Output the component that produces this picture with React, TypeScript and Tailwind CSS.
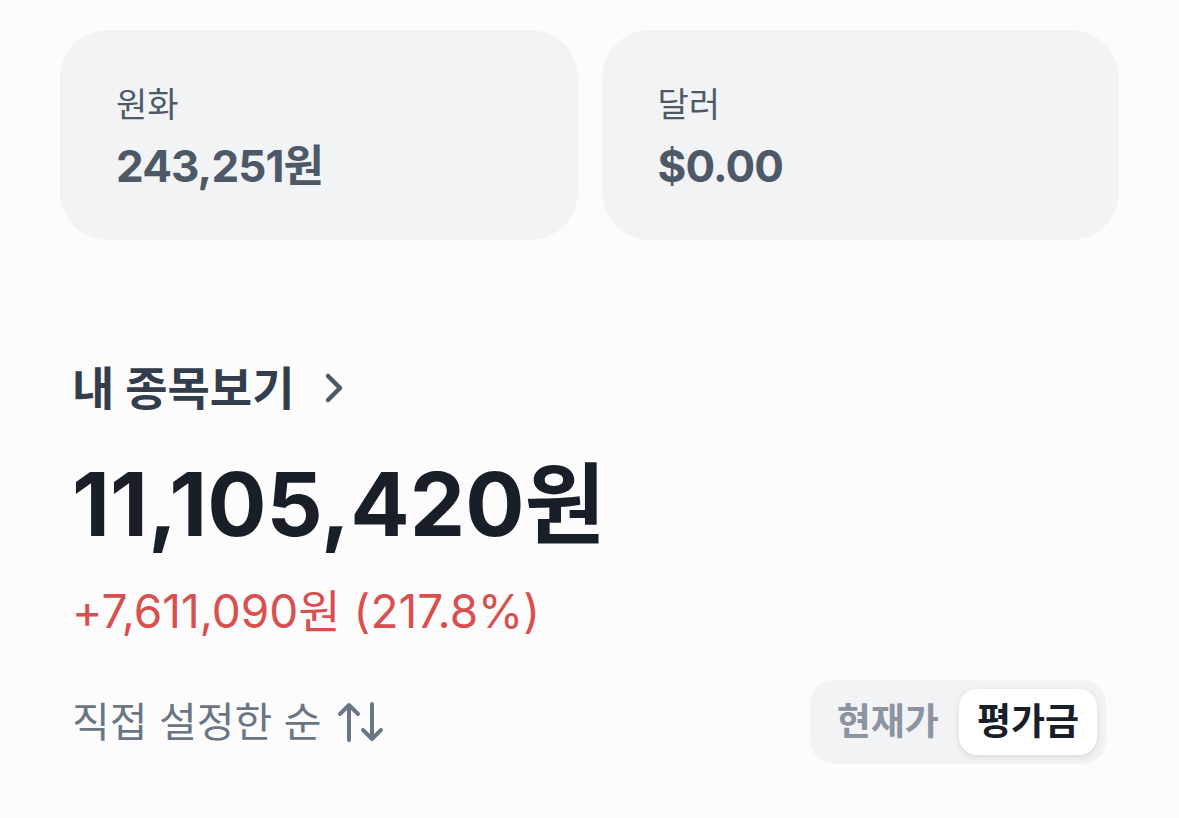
import React from 'react';

const font = { fontFamily: 'Inter, "Noto Sans CJK KR", sans-serif' };

function ChevronRight() {
  return (
    <svg width="22" height="34" viewBox="0 0 22 34" fill="none" className="ml-[28px]">
      <path d="M5 5l12 12-12 12" stroke="#4e5968" strokeWidth="4.5" strokeLinecap="round" strokeLinejoin="round" />
    </svg>
  );
}

function SortArrows() {
  return (
    <svg width="48" height="42" viewBox="0 0 48 42" fill="none" className="ml-[16px]">
      <path d="M12 39V4M3 13l9-9 9 9" stroke="#6b7684" strokeWidth="4" strokeLinecap="round" strokeLinejoin="round" />
      <path d="M35 3v35M26 29l9 9 9-9" stroke="#6b7684" strokeWidth="4" strokeLinecap="round" strokeLinejoin="round" />
    </svg>
  );
}

function BalanceCard({ label, value }: { label: string; value: string }) {
  return (
    <div className="flex h-[210px] flex-col justify-center rounded-[48px] bg-[#f2f3f5] pl-[56px] pt-[6px]">
      <span className="text-[34px] leading-none text-[#4e5968]">{label}</span>
      <span className="mt-[22px] text-[44px] font-bold leading-none tracking-[-0.02em] text-[#4e5968]">{value}</span>
    </div>
  );
}

export default function App() {
  return (
    <div className="min-h-screen bg-[#fcfcfd] px-[60px] pt-[30px]" style={font}>
      {/* Balance cards */}
      <div className="grid grid-cols-2 gap-6">
        <BalanceCard label="원화" value="243,251원" />
        <BalanceCard label="달러" value="$0.00" />
      </div>

      {/* Portfolio summary */}
      <div className="px-3 pt-[125px]">
        <button className="flex items-center text-[46px] font-bold leading-none text-[#333d4b]">
          내 종목보기
          <ChevronRight />
        </button>

        <div className="mt-[49px] text-[88px] font-bold leading-none text-[#191f28]">
          11,105,420원
        </div>

        <div className="mt-[40px] text-[46px] leading-none text-[#d94f4f]">
          +7,611,090원 (217.8%)
        </div>

        {/* Sort + toggle */}
        <div className="mt-[46px] flex items-center justify-between pr-[1px]">
          <button className="flex items-center text-[41px] leading-none text-[#6b7684]">
            직접 설정한 순
            <SortArrows />
          </button>

          <div className="flex h-[84px] items-center rounded-[24px] bg-[#f2f3f5] p-[9px] pl-[27px]">
            <span className="pr-[20px] text-[37px] font-bold text-[#8b95a1]">현재가</span>
            <span className="flex h-full items-center rounded-[18px] bg-white px-[18px] text-[37px] font-bold text-[#191f28] shadow-[0_2px_6px_rgba(0,0,0,0.12)]">
              평가금
            </span>
          </div>
        </div>
      </div>
    </div>
  );
}
